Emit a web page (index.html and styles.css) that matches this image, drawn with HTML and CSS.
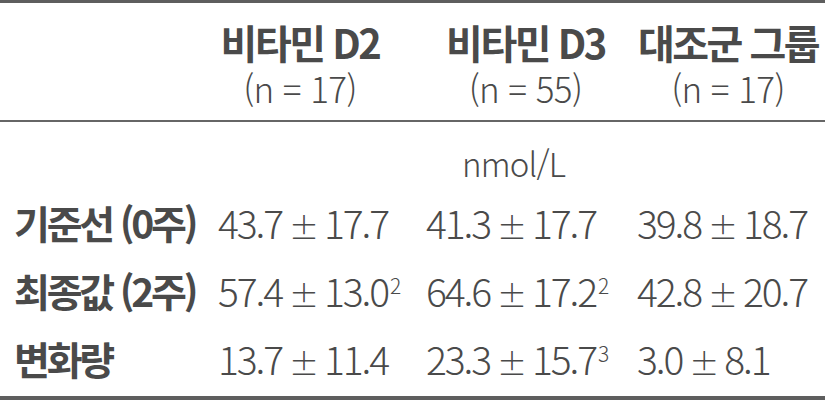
FILE: index.html
```html
<!DOCTYPE html>
<html lang="ko">
<head>
<meta charset="utf-8">
<link rel="stylesheet" href="styles.css">
</head>
<body>
<div class="table">
  <div class="head">
    <div class="label"></div>
    <div class="hcell c1"><div class="hname">비타민 D2</div><div class="hn">(n = 17)</div></div>
    <div class="hcell"><div class="hname">비타민 D3</div><div class="hn">(n = 55)</div></div>
    <div class="hcell"><div class="hname">대조군 그룹</div><div class="hn">(n = 17)</div></div>
  </div>
  <div class="body">
    <div class="unit">nmol/L</div>
    <div class="label">기준선 (0주)</div>
    <div class="cell">43.7<span class="pm">±</span>17.7</div>
    <div class="cell">41.3<span class="pm">±</span>17.7</div>
    <div class="cell">39.8<span class="pm">±</span>18.7</div>
    <div class="label">최종값 (2주)</div>
    <div class="cell">57.4<span class="pm">±</span>13.0<sup>2</sup></div>
    <div class="cell">64.6<span class="pm">±</span>17.2<sup>2</sup></div>
    <div class="cell">42.8<span class="pm">±</span>20.7</div>
    <div class="label">변화량</div>
    <div class="cell">13.7<span class="pm">±</span>11.4</div>
    <div class="cell">23.3<span class="pm">±</span>15.7<sup>3</sup></div>
    <div class="cell">3.0<span class="pm">±</span>8.1</div>
  </div>
</div>
</body>
</html>
```

FILE: styles.css
```css
html, body {
  margin: 0;
  padding: 0;
  background: #ffffff;
}
body {
  width: 825px;
  height: 402px;
  overflow: hidden;
  font-family: "Noto Sans CJK KR", "Noto Sans", sans-serif;
  color: #4a4a4a;
}
.table {
  border-top: 3px solid #5e5e5e;
  border-bottom: 4px solid #5e5e5e;
}
.head, .body {
  display: grid;
  grid-template-columns: 212px 208px 211px 194px;
}
.head {
  padding: 17px 0 10px;
  border-bottom: 2px solid #666666;
}
.hcell {
  text-align: center;
  line-height: 45px;
  white-space: nowrap;
}
.hcell.c1 {
  padding-right: 32px;
}
.hname {
  font-weight: 700;
  font-size: 40px;
  letter-spacing: -2.5px;
}
.hn {
  font-weight: 300;
  font-size: 35px;
  letter-spacing: -0.6px;
}
.body {
  padding: 16px 0 4px;
  grid-template-rows: 50px 68px 68px 68px;
  align-items: center;
}
.unit {
  grid-column: 2 / 5;
  text-align: center;
  font-weight: 300;
  font-size: 33px;
  letter-spacing: -0.8px;
  line-height: 50px;
  padding-right: 10px;
}
.label {
  padding-left: 14px;
  font-weight: 700;
  font-size: 39px;
  letter-spacing: -3.2px;
  white-space: nowrap;
}
.cell {
  padding-left: 6px;
  font-weight: 300;
  font-size: 39px;
  letter-spacing: -2.1px;
  white-space: nowrap;
}
.pm {
  font-size: 30px;
  margin: 0 5px 0 7px;
  letter-spacing: 0;
}
sup {
  font-size: 21px;
  letter-spacing: 0;
  margin-left: 2px;
  vertical-align: 13px;
  line-height: 0;
}
```
